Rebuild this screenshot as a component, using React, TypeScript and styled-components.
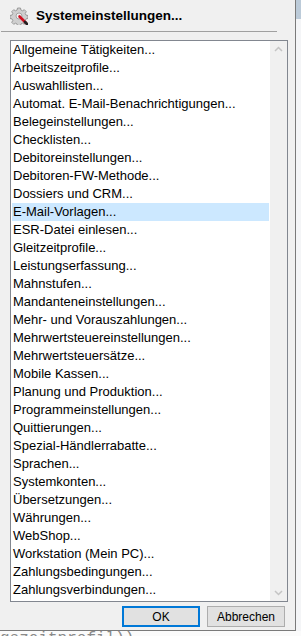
import styled, { createGlobalStyle } from 'styled-components';

const GlobalStyle = createGlobalStyle`
  html, body {
    margin: 0;
    padding: 0;
    overflow: hidden;
  }
  body {
    font-family: "Liberation Sans", Arial, sans-serif;
  }
`;

const Screen = styled.div`
  width: 301px;
  height: 636px;
  display: flex;
  flex-direction: column;
  overflow: hidden;
  background: linear-gradient(to bottom, #bccbd9 0, #bccbd9 19px, #f4f5f7 19px);
`;

const Dialog = styled.div`
  width: 295px;
  height: 630px;
  flex-shrink: 0;
  background: #f0f0f0;
  border-right: 1px solid #7a7a7a;
  border-bottom: 1px solid #7a7a7a;
  display: flex;
  flex-direction: column;
`;

const Header = styled.div`
  height: 31px;
  display: flex;
  align-items: center;
  gap: 8px;
  padding-left: 10px;
`;

const Title = styled.span`
  font-weight: bold;
  font-size: 13.5px;
  color: #000;
`;

const Separator = styled.div`
  width: 276px;
  height: 1px;
  margin-left: 1px;
  background: #a0a0a0;
`;

const ListBox = styled.div`
  margin: 8px 0 0 10px;
  width: 276px;
  height: 560px;
  border: 1px solid #828790;
  background: #fff;
  display: flex;
`;

const Items = styled.div`
  flex: 1;
  padding: 0 1px;
  display: flex;
  flex-direction: column;
`;

const Item = styled.div<{ $selected?: boolean }>`
  height: 18px;
  line-height: 18px;
  padding-left: 1px;
  font-size: 13px;
  color: #000;
  white-space: nowrap;
  background: ${(p) => (p.$selected ? '#cce8ff' : 'transparent')};
`;

const Scrollbar = styled.div`
  width: 17px;
  background: #f0f0f0;
  display: flex;
  flex-direction: column;
  justify-content: space-between;
  align-items: center;
  padding: 5px 0;
`;

const Footer = styled.div`
  display: flex;
  justify-content: flex-end;
  gap: 7px;
  padding: 4px 10px 0 0;
`;

const Button = styled.button<{ $default?: boolean }>`
  width: 78px;
  height: 21px;
  box-sizing: border-box;
  padding: 0;
  background: #e1e1e1;
  border: ${(p) => (p.$default ? '2px solid #0078d7' : '1px solid #adadad')};
  font-family: "Liberation Sans", Arial, sans-serif;
  font-size: 12px;
  color: #000;
`;

const CodeStrip = styled.div`
  height: 5px;
  overflow: hidden;
  background: #fbfbfb;
`;

const CodeLine = styled.div`
  font-family: "Liberation Mono", "DejaVu Sans Mono", monospace;
  font-size: 16px;
  line-height: 16px;
  color: #8a8a8a;
  white-space: pre;
`;

const items = [
  'Allgemeine Tätigkeiten...',
  'Arbeitszeitprofile...',
  'Auswahllisten...',
  'Automat. E-Mail-Benachrichtigungen...',
  'Belegeinstellungen...',
  'Checklisten...',
  'Debitoreinstellungen...',
  'Debitoren-FW-Methode...',
  'Dossiers und CRM...',
  'E-Mail-Vorlagen...',
  'ESR-Datei einlesen...',
  'Gleitzeitprofile...',
  'Leistungserfassung...',
  'Mahnstufen...',
  'Mandanteneinstellungen...',
  'Mehr- und Vorauszahlungen...',
  'Mehrwertsteuereinstellungen...',
  'Mehrwertsteuersätze...',
  'Mobile Kassen...',
  'Planung und Produktion...',
  'Programmeinstellungen...',
  'Quittierungen...',
  'Spezial-Händlerrabatte...',
  'Sprachen...',
  'Systemkonten...',
  'Übersetzungen...',
  'Währungen...',
  'WebShop...',
  'Workstation (Mein PC)...',
  'Zahlungsbedingungen...',
  'Zahlungsverbindungen...',
];

const SettingsIcon = () => (
  <svg width="18" height="18" viewBox="0 0 18 18">
    <g fill="#cfcfcf" stroke="#8a8a8a" strokeWidth="0.8">
      <path d="M7.5 1h3l.4 2 1.6.8 1.8-1.1 2 2-1.1 1.8.8 1.6 2 .4v3l-2 .4-.8 1.6 1.1 1.8-2 2-1.8-1.1-1.6.8-.4 2h-3l-.4-2-1.6-.8-1.8 1.1-2-2 1.1-1.8-.8-1.6-2-.4v-3l2-.4.8-1.6-1.1-1.8 2-2 1.8 1.1 1.6-.8z" />
    </g>
    <circle cx="9" cy="9" r="3" fill="#f0f0f0" stroke="#959595" strokeWidth="0.8" />
    <path d="M9.5 9.5l6.5 6.5" stroke="#d01020" strokeWidth="2.6" strokeLinecap="round" />
    <path d="M15 15l2 2" stroke="#222" strokeWidth="2.6" strokeLinecap="round" />
  </svg>
);

const Chevron = ({ up }: { up?: boolean }) => (
  <svg width="9" height="6" viewBox="0 0 9 6">
    <path
      d={up ? 'M1 5l3.5-3.5L8 5' : 'M1 1l3.5 3.5L8 1'}
      fill="none"
      stroke="#c4c4c4"
      strokeWidth="1.5"
    />
  </svg>
);

const App = () => {
  return (
    <>
      <GlobalStyle />
      <Screen>
        <Dialog>
          <Header>
            <SettingsIcon />
            <Title>Systemeinstellungen...</Title>
          </Header>
          <Separator />
          <ListBox>
            <Items>
              {items.map((it) => (
                <Item key={it} $selected={it === 'E-Mail-Vorlagen...'}>
                  {it}
                </Item>
              ))}
            </Items>
            <Scrollbar>
              <Chevron up />
              <Chevron />
            </Scrollbar>
          </ListBox>
          <Footer>
            <Button $default>OK</Button>
            <Button>Abbrechen</Button>
          </Footer>
        </Dialog>
        <CodeStrip>
          <CodeLine>{'gszeitprofil))'}</CodeLine>
        </CodeStrip>
      </Screen>
    </>
  );
};

export default App;
